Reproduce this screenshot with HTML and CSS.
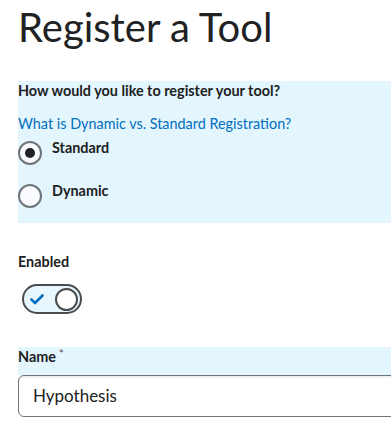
FILE: index.html
```html
<!DOCTYPE html>
<html lang="en">
<head>
    <meta charset="UTF-8">
    <title>Register a Tool</title>
    <link rel="stylesheet" href="styles.css">
</head>
<body>
    <h1>Register a Tool</h1>

    <div class="panel">
        <p class="field-label">How would you like to register your tool?</p>
        <a class="help-link" href="#">What is Dynamic vs. Standard Registration?</a>
        <label class="radio-row">
            <span class="radio checked"></span>
            <span class="radio-text">Standard</span>
        </label>
        <label class="radio-row second">
            <span class="radio"></span>
            <span class="radio-text">Dynamic</span>
        </label>
    </div>

    <div class="enabled">
        <p class="field-label">Enabled</p>
        <div class="switch">
            <svg class="check" width="14" height="11" viewBox="0 0 14 11">
                <polyline points="1.5,5.5 5,9 12.5,1.5" fill="none" stroke="#006fbf" stroke-width="2.6" stroke-linecap="round" stroke-linejoin="round"/>
            </svg>
            <span class="knob"></span>
        </div>
    </div>

    <div class="name-label">
        <p class="field-label">Name<span class="req">*</span></p>
    </div>
    <div class="name-input">Hypothesis</div>
</body>
</html>
```

FILE: styles.css
```css
body {
    font-family: Lato, "Noto Sans", sans-serif;
    color: #202122;
    margin: 0;
    padding: 0 0 0 18px;
    overflow: hidden;
    background-color: #fff;
}
h1 {
    font-size: 40px;
    font-weight: 400;
    line-height: 50px;
    margin: 2px 0 29px 0;
}
.panel {
    background-color: #e3f5fd;
    padding-bottom: 15px;
}
.field-label {
    font-size: 14.4px;
    font-weight: 700;
    line-height: 20px;
    margin: 0;
}
.help-link {
    display: block;
    margin-top: 13px;
    font-size: 14.4px;
    line-height: 20px;
    color: #006fbf;
    text-decoration: none;
}
.radio-row {
    display: flex;
    align-items: flex-start;
    margin-top: 4px;
}
.radio-row.second {
    margin-top: 16px;
}
.radio {
    box-sizing: border-box;
    width: 24px;
    height: 24px;
    margin-top: 3px;
    border: 2px solid #6e7477;
    border-radius: 50%;
    background-color: #f9fbff;
    display: flex;
    align-items: center;
    justify-content: center;
}
.radio.checked::after {
    content: "";
    width: 10px;
    height: 10px;
    border-radius: 50%;
    background-color: #202122;
}
.radio-text {
    margin-left: 10px;
    font-size: 14.4px;
    font-weight: 700;
    line-height: 20px;
}
.enabled {
    margin-top: 29px;
}
.switch {
    box-sizing: border-box;
    width: 60px;
    height: 30px;
    margin: 12px 0 0 4px;
    border: 2px solid #494c4e;
    border-radius: 15px;
    background-color: #e8f6fd;
    display: flex;
    align-items: center;
    justify-content: space-between;
    padding: 0 2px 0 6px;
}
.knob {
    box-sizing: border-box;
    width: 23px;
    height: 23px;
    border: 2px solid #494c4e;
    border-radius: 50%;
    background-color: #fff;
}
.name-label {
    margin-top: 33px;
    background-color: #e3f5fd;
    padding-bottom: 8px;
}
.req {
    font-weight: 400;
    font-size: 11px;
    color: #494c4e;
    vertical-align: top;
    margin-left: 3px;
    line-height: 14px;
}
.name-input {
    box-sizing: border-box;
    width: 420px;
    height: 42px;
    border: 1px solid #6e7477;
    border-radius: 6px;
    box-shadow: inset 0 2px 0 0 rgba(177, 185, 190, 0.2);
    padding: 0 14px;
    font-size: 17px;
    line-height: 40px;
}
```
